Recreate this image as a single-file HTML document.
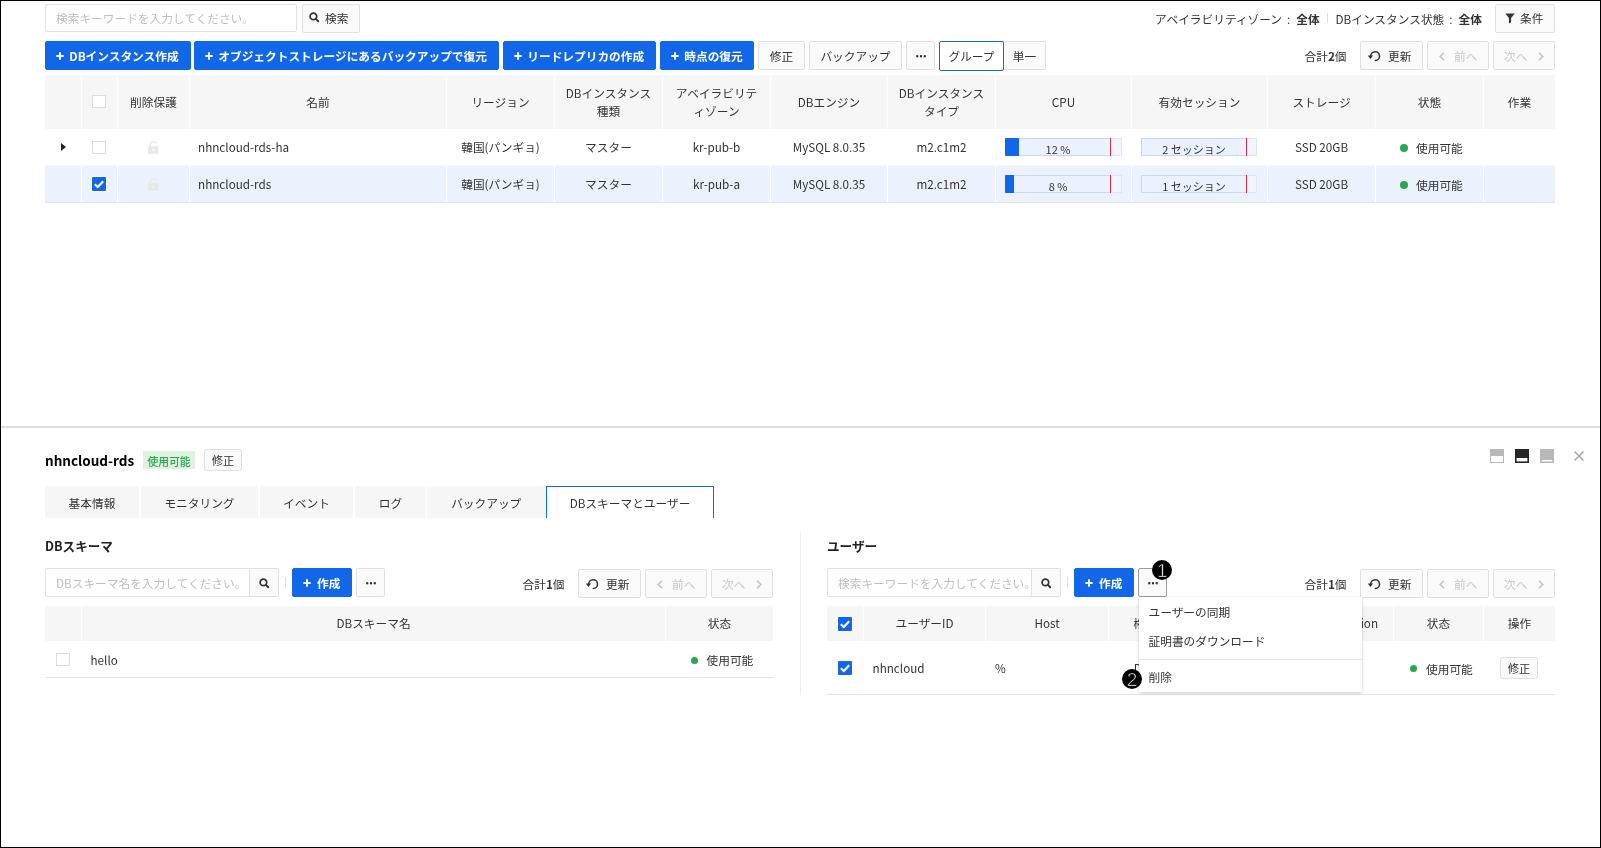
<!DOCTYPE html>
<html lang="ja">
<head>
<meta charset="utf-8">
<title>RDS for MySQL</title>
<style>
*{box-sizing:border-box;margin:0;padding:0}
html,body{width:1601px;height:848px;overflow:hidden;background:#fff}
body{font-family:"Noto Sans CJK JP","Liberation Sans",sans-serif;font-size:11.7px;color:#333;line-height:1}
#root{position:absolute;left:0;top:0;width:1601px;height:848px;will-change:transform;overflow:hidden}
#frame{position:absolute;left:0;top:0;width:1601px;height:848px;border:1px solid #000;z-index:50}
.abs{position:absolute}
.btn{position:absolute;height:29px;border:1px solid #e0e0e0;background:#fafafa;border-radius:2px}
.btn.pri{background:#1167e7;border-color:#1167e7;color:#fff;font-weight:700}
.btn.pri .t{color:#fff}
.btn.dis .t{color:#c6c6c6}
.inp{position:absolute;height:29px;border:1px solid #e0e0e0;background:#fff;border-radius:2px}
.inp .t{color:#bfbfbf}
.t{position:absolute;white-space:nowrap;line-height:17px;height:17px;color:#333}
.c{text-align:center}
.hd{position:absolute;background:#f6f6f6}
.sep{position:absolute;width:1px;background:#fff}
.cb{position:absolute;width:14px;height:13px;border:1px solid #dcdcdc;background:#fff}
.cbon{position:absolute;width:14px;height:14px;background:#1167e7;border-radius:1px;box-shadow:0 0 0 1px #fff}
.dot{position:absolute;width:8px;height:8px;border-radius:50%;background:#26a84c}
.dot.s{width:7px;height:7px}
.tab{position:absolute;top:486px;height:32px;background:#f6f6f6}
.tab.on{background:#fff;border:1px solid #1167e7;border-bottom:0}
.circ{position:absolute;width:20px;height:20px;border-radius:50%;background:#000}
.circ .t{color:#fff;font-family:"Liberation Sans",sans-serif;font-size:19px;line-height:20px;height:20px;left:0;top:1px;width:20px;text-align:center;-webkit-text-stroke:0.7px #000}
.line{position:absolute;height:1px;background:#e4e4e4}
</style>
</head>
<body>
<div id="root">
<div id="frame"></div>
<div class="inp" style="left:45px;top:4px;width:252px;height:28px"><div class="t" style="left:10px;top:4px">検索キーワードを入力してください。</div></div>
<div class="btn " style="left:302px;top:4px;width:58px;height:28.5px;">
<svg class="abs" style="left:6.2px;top:7px" width="11" height="11" viewBox="0 0 11 11"><circle cx="4.4" cy="4.4" r="3.3" fill="none" stroke="#333" stroke-width="1.7"/><path d="M6.9 6.9L9.2 9.2" stroke="#333" stroke-width="2" stroke-linecap="round"/></svg>
<div class="t " style="left:22px;top:4px;">検索</div>
</div>
<div class="t " style="left:1155px;top:9.5px;">アベイラビリティゾーン<span style="margin:0 6px 0 5px">:</span><b>全体</b></div>
<div class="abs" style="left:1327px;top:13px;width:1px;height:10px;background:#ddd"></div>
<div class="t " style="left:1335.5px;top:9.5px;">DBインスタンス状態<span style="margin:0 6px 0 5px">:</span><b>全体</b></div>
<div class="btn " style="left:1495px;top:4px;width:60px;height:28.5px;">
<svg class="abs" style="left:9px;top:8.4px" width="10" height="11" viewBox="0 0 10 11"><path d="M0.3 0.6h9.4L6.1 5v4.2L3.9 10.6V5z" fill="#333"/></svg>
<div class="t " style="left:24px;top:4px;">条件</div>
</div>
<div class="btn pri" style="left:45px;top:41px;width:146px;height:29px;">
<svg class="abs" style="left:10.3px;top:10px" width="8" height="8" viewBox="0 0 8 8"><path d="M4 0.3V7.7M0.3 4H7.7" stroke="#fff" stroke-width="1.9"/></svg>
<div class="t " style="left:23.3px;top:5px;">DBインスタンス作成</div>
</div>
<div class="btn pri" style="left:194px;top:41px;width:305px;height:29px;">
<svg class="abs" style="left:10.3px;top:10px" width="8" height="8" viewBox="0 0 8 8"><path d="M4 0.3V7.7M0.3 4H7.7" stroke="#fff" stroke-width="1.9"/></svg>
<div class="t " style="left:23.3px;top:5px;">オブジェクトストレージにあるバックアップで復元</div>
</div>
<div class="btn pri" style="left:503px;top:41px;width:153px;height:29px;">
<svg class="abs" style="left:10.3px;top:10px" width="8" height="8" viewBox="0 0 8 8"><path d="M4 0.3V7.7M0.3 4H7.7" stroke="#fff" stroke-width="1.9"/></svg>
<div class="t " style="left:23.3px;top:5px;">リードレプリカの作成</div>
</div>
<div class="btn pri" style="left:660px;top:41px;width:94px;height:29px;">
<svg class="abs" style="left:10.3px;top:10px" width="8" height="8" viewBox="0 0 8 8"><path d="M4 0.3V7.7M0.3 4H7.7" stroke="#fff" stroke-width="1.9"/></svg>
<div class="t " style="left:23.3px;top:5px;">時点の復元</div>
</div>
<div class="btn " style="left:758px;top:41px;width:47px;height:29px;">
<div class="t c" style="left:0px;top:5px;width:45px;">修正</div>
</div>
<div class="btn " style="left:809px;top:41px;width:93px;height:29px;">
<div class="t c" style="left:0px;top:5px;width:91px;">バックアップ</div>
</div>
<div class="btn " style="left:906px;top:41px;width:29px;height:29px;">
<svg class="abs" style="left:9px;top:13px" width="10" height="3" viewBox="0 0 10 3"><rect x="0.2" y="0.2" width="2.1" height="2.1" fill="#2a2a2a"/><rect x="3.95" y="0.2" width="2.1" height="2.1" fill="#2a2a2a"/><rect x="7.7" y="0.2" width="2.1" height="2.1" fill="#2a2a2a"/></svg>
</div>
<div class="btn " style="left:1003px;top:41px;width:43px;height:29px;border-left:0;border-radius:0 2px 2px 0">
<div class="t c" style="left:1px;top:5px;width:41px;">単一</div>
</div>
<div class="btn " style="left:939px;top:41px;width:65px;height:30px;background:#fff;border-color:#1167e7">
<div class="t c" style="left:0px;top:5px;width:63px;">グループ</div>
</div>
<div class="t " style="left:1304.5px;top:46.5px;">合計<b>2</b>個</div>
<div class="btn " style="left:1360px;top:41px;width:63px;height:29px;">
<svg class="abs" style="left:6px;top:8px" width="14" height="12" viewBox="0 0 14 12"><path d="M3.7 6.1A4.4 4.4 0 1 1 8.4 10.5" fill="none" stroke="#333" stroke-width="1.5" stroke-linecap="round"/><path d="M0.8 5.4L6.1 5.4L3.4 9z" fill="#333"/></svg>
<div class="t " style="left:27px;top:5px;">更新</div>
</div>
<div class="btn dis" style="left:1427px;top:41px;width:62px;height:29px;">
<svg class="abs" style="left:10.5px;top:9.6px" width="6" height="9" viewBox="0 0 6 9"><path d="M5 0.7L1.2 4.5L5 8.3" fill="none" stroke="#c4c4c4" stroke-width="1.6"/></svg>
<div class="t " style="left:26px;top:5px;">前へ</div>
</div>
<div class="btn dis" style="left:1493px;top:41px;width:62px;height:29px;">
<div class="t " style="left:10px;top:5px;">次へ</div>
<svg class="abs" style="left:44.2px;top:9.6px" width="6" height="9" viewBox="0 0 6 9"><path d="M1 0.7L4.8 4.5L1 8.3" fill="none" stroke="#c4c4c4" stroke-width="1.6"/></svg>
</div>
<div class="hd" style="left:45px;top:75px;width:1510px;height:54px"></div>
<div class="abs" style="left:45px;top:165px;width:1510px;height:1px;background:#f3f7fe"></div>
<div class="abs" style="left:45px;top:166px;width:1510px;height:36px;background:#ebf2fe"></div>
<div class="sep" style="left:81px;top:75px;height:127px"></div>
<div class="sep" style="left:117px;top:75px;height:127px"></div>
<div class="sep" style="left:189px;top:75px;height:127px"></div>
<div class="sep" style="left:446px;top:75px;height:127px"></div>
<div class="sep" style="left:554px;top:75px;height:127px"></div>
<div class="sep" style="left:662px;top:75px;height:127px"></div>
<div class="sep" style="left:770px;top:75px;height:127px"></div>
<div class="sep" style="left:887px;top:75px;height:127px"></div>
<div class="sep" style="left:995px;top:75px;height:127px"></div>
<div class="sep" style="left:1131px;top:75px;height:127px"></div>
<div class="sep" style="left:1267px;top:75px;height:127px"></div>
<div class="sep" style="left:1375px;top:75px;height:127px"></div>
<div class="sep" style="left:1483px;top:75px;height:127px"></div>
<div class="line" style="left:45px;top:202px;width:1510px"></div>
<div class="t c" style="left:118px;top:93px;width:71px;">削除保護</div>
<div class="t c" style="left:190px;top:93px;width:256px;">名前</div>
<div class="t c" style="left:447px;top:93px;width:107px;">リージョン</div>
<div class="t c" style="left:555px;top:84px;width:107px;">DBインスタンス</div>
<div class="t c" style="left:555px;top:102px;width:107px;">種類</div>
<div class="t c" style="left:663px;top:84px;width:107px;">アベイラビリテ</div>
<div class="t c" style="left:663px;top:102px;width:107px;">ィゾーン</div>
<div class="t c" style="left:771px;top:93px;width:116px;">DBエンジン</div>
<div class="t c" style="left:888px;top:84px;width:107px;">DBインスタンス</div>
<div class="t c" style="left:888px;top:102px;width:107px;">タイプ</div>
<div class="t c" style="left:996px;top:93px;width:135px;">CPU</div>
<div class="t c" style="left:1132px;top:93px;width:135px;">有効セッション</div>
<div class="t c" style="left:1268px;top:93px;width:107px;">ストレージ</div>
<div class="t c" style="left:1376px;top:93px;width:107px;">状態</div>
<div class="t c" style="left:1484px;top:93px;width:71px;">作業</div>
<div class="cb" style="left:92px;top:95px"></div>
<div class="t " style="left:198px;top:138px;">nhncloud-rds-ha</div>
<div class="t c" style="left:447px;top:138px;width:107px;">韓国(パンギョ)</div>
<div class="t c" style="left:555px;top:138px;width:107px;">マスター</div>
<div class="t c" style="left:663px;top:138px;width:107px;">kr-pub-b</div>
<div class="t c" style="left:771px;top:138px;width:116px;">MySQL 8.0.35</div>
<div class="t c" style="left:888px;top:138px;width:107px;">m2.c1m2</div>
<div class="t c" style="left:1268px;top:138px;width:107px;">SSD 20GB</div>
<div class="abs" style="left:1005px;top:138px;width:117px;height:18px;border:1px solid #dbe6fc;background:#f1f5fe"></div>
<div class="abs" style="left:1005px;top:138px;width:106px;height:18px;border:1px solid #c3d7fb;background:#ebf1fe"></div>
<div class="abs" style="left:1005px;top:138px;width:14px;height:18px;background:#1167e7;border-radius:1px 0 0 1px"></div>
<div class="abs" style="left:1110px;top:138px;width:1px;height:18px;background:#dc2a3e"></div>
<div class="t c" style="left:1005px;top:141px;width:106px;font-size:11px">12 %</div>
<div class="abs" style="left:1141px;top:138px;width:116px;height:18px;border:1px solid #dbe6fc;background:#f1f5fe"></div>
<div class="abs" style="left:1141px;top:138px;width:106px;height:18px;border:1px solid #c3d7fb;background:#ebf1fe"></div>
<div class="abs" style="left:1246px;top:138px;width:1px;height:18px;background:#dc2a3e"></div>
<div class="t c" style="left:1141px;top:141px;width:106px;font-size:11px">2 セッション</div>
<div class="dot" style="left:1400px;top:144px"></div>
<div class="t " style="left:1416px;top:139px;">使用可能</div>
<svg class="abs" style="left:148px;top:141px" width="11" height="13" viewBox="0 0 11 13"><path d="M2.2 5.5V3.8A3.2 3.2 0 0 1 8.2 2.3" fill="none" stroke="#e8e8e8" stroke-width="1.5"/><path d="M0 5.2h10.4v7.6H0z M4.4 8h1.6v2.2H4.4z" fill="#e8e8e8" fill-rule="evenodd"/></svg>
<div class="t " style="left:198px;top:175px;">nhncloud-rds</div>
<div class="t c" style="left:447px;top:175px;width:107px;">韓国(パンギョ)</div>
<div class="t c" style="left:555px;top:175px;width:107px;">マスター</div>
<div class="t c" style="left:663px;top:175px;width:107px;">kr-pub-a</div>
<div class="t c" style="left:771px;top:175px;width:116px;">MySQL 8.0.35</div>
<div class="t c" style="left:888px;top:175px;width:107px;">m2.c1m2</div>
<div class="t c" style="left:1268px;top:175px;width:107px;">SSD 20GB</div>
<div class="abs" style="left:1005px;top:175px;width:117px;height:18px;border:1px solid #dbe6fc;background:#f1f5fe"></div>
<div class="abs" style="left:1005px;top:175px;width:106px;height:18px;border:1px solid #c3d7fb;background:#ebf1fe"></div>
<div class="abs" style="left:1005px;top:175px;width:9px;height:18px;background:#1167e7;border-radius:1px 0 0 1px"></div>
<div class="abs" style="left:1110px;top:175px;width:1px;height:18px;background:#dc2a3e"></div>
<div class="t c" style="left:1005px;top:178px;width:106px;font-size:11px">8 %</div>
<div class="abs" style="left:1141px;top:175px;width:116px;height:18px;border:1px solid #dbe6fc;background:#f1f5fe"></div>
<div class="abs" style="left:1141px;top:175px;width:106px;height:18px;border:1px solid #c3d7fb;background:#ebf1fe"></div>
<div class="abs" style="left:1246px;top:175px;width:1px;height:18px;background:#dc2a3e"></div>
<div class="t c" style="left:1141px;top:178px;width:106px;font-size:11px">1 セッション</div>
<div class="dot" style="left:1400px;top:181px"></div>
<div class="t " style="left:1416px;top:176px;">使用可能</div>
<svg class="abs" style="left:148px;top:178px" width="11" height="13" viewBox="0 0 11 13"><path d="M2.2 5.5V3.8A3.2 3.2 0 0 1 8.2 2.3" fill="none" stroke="#e8e8e8" stroke-width="1.5"/><path d="M0 5.2h10.4v7.6H0z M4.4 8h1.6v2.2H4.4z" fill="#e8e8e8" fill-rule="evenodd"/></svg>
<svg class="abs" style="left:61px;top:143px" width="5" height="8" viewBox="0 0 5 8"><path d="M0 0L5 4L0 8z" fill="#222"/></svg>
<div class="cb" style="left:92px;top:141px"></div>
<div class="cbon" style="left:92px;top:177px"><svg class="abs" style="left:0;top:0" width="14" height="14" viewBox="0 0 14 14"><path d="M2.8 7.2L5.8 10L11.2 4.2" fill="none" stroke="#fff" stroke-width="2"/></svg></div>
<div class="abs" style="left:1px;top:426px;width:1599px;height:2px;background:#dedede"></div>
<div class="t " style="left:45px;top:450px;font-size:13.5px;font-weight:700;color:#000;line-height:20px;height:20px">nhncloud-rds</div>
<div class="abs" style="left:143px;top:451px;width:52px;height:18px;background:#dff2e2"></div>
<div class="t c" style="left:143px;top:453px;width:52px;font-size:10.8px;font-weight:500;color:#25a74b;line-height:16px;height:16px">使用可能</div>
<div class="btn " style="left:204px;top:449px;width:38px;height:22px;">
<div class="t c" style="left:0px;top:2px;width:36px;font-size:11.3px;line-height:16px;height:16px">修正</div>
</div>
<svg class="abs" style="left:1490px;top:449px" width="14" height="14"><rect x="0.5" y="0.5" width="13" height="13" fill="#fff" stroke="#b8b8b8"/><rect x="0" y="0" width="14" height="7" fill="#b8b8b8"/></svg>
<svg class="abs" style="left:1515px;top:449px" width="14" height="14"><rect x="0" y="0" width="14" height="14" fill="#262626"/><rect x="1.6" y="9" width="10.8" height="3.4" fill="#fff"/></svg>
<svg class="abs" style="left:1540px;top:449px" width="14" height="14"><rect x="0" y="0" width="14" height="14" fill="#b8b8b8"/><rect x="1.6" y="11" width="10.8" height="1.4" fill="#fff"/></svg>
<svg class="abs" style="left:1574px;top:451px" width="10" height="10"><path d="M0.5 0.5L9.5 9.5M9.5 0.5L0.5 9.5" stroke="#a8a8a8" stroke-width="1.5"/></svg>
<div class="tab" style="left:45px;width:94px"><div class="t c" style="left:0;top:8px;width:94px">基本情報</div></div>
<div class="tab" style="left:141px;width:117px"><div class="t c" style="left:0;top:8px;width:117px">モニタリング</div></div>
<div class="tab" style="left:260px;width:93px"><div class="t c" style="left:0;top:8px;width:93px">イベント</div></div>
<div class="tab" style="left:355px;width:71px"><div class="t c" style="left:0;top:8px;width:71px">ログ</div></div>
<div class="tab" style="left:427px;width:118.5px"><div class="t c" style="left:0;top:8px;width:118.5px">バックアップ</div></div>
<div class="tab on" style="left:546px;width:168px"><div class="t c" style="left:0;top:7px;width:166px">DBスキーマとユーザー</div></div>
<div class="t " style="left:45px;top:537px;font-size:12.6px;font-weight:700;color:#222;line-height:18px;height:18px">DBスキーマ</div>
<div class="inp" style="left:45px;top:568px;width:205px;border-radius:2px 0 0 2px"><div class="t" style="left:10px;top:5px">DBスキーマ名を入力してください。</div></div>
<div class="btn " style="left:249px;top:568px;width:30px;height:29px;border-radius:0 2px 2px 0">
<svg class="abs" style="left:9px;top:8.5px" width="11" height="11" viewBox="0 0 11 11"><circle cx="4.4" cy="4.4" r="3.3" fill="none" stroke="#333" stroke-width="1.7"/><path d="M6.9 6.9L9.2 9.2" stroke="#333" stroke-width="2" stroke-linecap="round"/></svg>
</div>
<div class="abs" style="left:285px;top:577px;width:1px;height:11px;background:#ddd"></div>
<div class="btn pri" style="left:292px;top:568px;width:60px;height:29px;">
<svg class="abs" style="left:10px;top:10px" width="8" height="8" viewBox="0 0 8 8"><path d="M4 0.3V7.7M0.3 4H7.7" stroke="#fff" stroke-width="1.9"/></svg>
<div class="t " style="left:24px;top:5px;">作成</div>
</div>
<div class="btn " style="left:356px;top:568px;width:29px;height:29px;">
<svg class="abs" style="left:9px;top:13px" width="10" height="3" viewBox="0 0 10 3"><rect x="0.2" y="0.2" width="2.1" height="2.1" fill="#2a2a2a"/><rect x="3.95" y="0.2" width="2.1" height="2.1" fill="#2a2a2a"/><rect x="7.7" y="0.2" width="2.1" height="2.1" fill="#2a2a2a"/></svg>
</div>
<div class="t " style="left:522.5px;top:574.5px;">合計<b>1</b>個</div>
<div class="btn " style="left:578px;top:569px;width:63px;height:29px;">
<svg class="abs" style="left:6px;top:8px" width="14" height="12" viewBox="0 0 14 12"><path d="M3.7 6.1A4.4 4.4 0 1 1 8.4 10.5" fill="none" stroke="#333" stroke-width="1.5" stroke-linecap="round"/><path d="M0.8 5.4L6.1 5.4L3.4 9z" fill="#333"/></svg>
<div class="t " style="left:27px;top:5px;">更新</div>
</div>
<div class="btn dis" style="left:645px;top:569px;width:62px;height:29px;">
<svg class="abs" style="left:10.5px;top:9.6px" width="6" height="9" viewBox="0 0 6 9"><path d="M5 0.7L1.2 4.5L5 8.3" fill="none" stroke="#c4c4c4" stroke-width="1.6"/></svg>
<div class="t " style="left:26px;top:5px;">前へ</div>
</div>
<div class="btn dis" style="left:711px;top:569px;width:62px;height:29px;">
<div class="t " style="left:10px;top:5px;">次へ</div>
<svg class="abs" style="left:44.2px;top:9.6px" width="6" height="9" viewBox="0 0 6 9"><path d="M1 0.7L4.8 4.5L1 8.3" fill="none" stroke="#c4c4c4" stroke-width="1.6"/></svg>
</div>
<div class="hd" style="left:45px;top:606px;width:728px;height:35px"></div>
<div class="sep" style="left:81px;top:606px;height:35px"></div>
<div class="sep" style="left:665px;top:606px;height:35px"></div>
<div class="t c" style="left:82px;top:614px;width:583px;">DBスキーマ名</div>
<div class="t c" style="left:666px;top:614px;width:107px;">状态</div>
<div class="cb" style="left:56px;top:653px"></div>
<div class="t " style="left:90.5px;top:651px;">hello</div>
<div class="dot s" style="left:691px;top:657px"></div>
<div class="t " style="left:706.5px;top:651px;">使用可能</div>
<div class="line" style="left:45px;top:677px;width:728px"></div>
<div class="abs" style="left:800px;top:532px;width:1px;height:163px;background:#eee"></div>
<div class="t " style="left:827px;top:537px;font-size:12.6px;font-weight:700;color:#222;line-height:18px;height:18px">ユーザー</div>
<div class="inp" style="left:827px;top:568px;width:205px;border-radius:2px 0 0 2px"><div class="t" style="left:10px;top:5px">検索キーワードを入力してください。</div></div>
<div class="btn " style="left:1031px;top:568px;width:30px;height:29px;border-radius:0 2px 2px 0">
<svg class="abs" style="left:9px;top:8.5px" width="11" height="11" viewBox="0 0 11 11"><circle cx="4.4" cy="4.4" r="3.3" fill="none" stroke="#333" stroke-width="1.7"/><path d="M6.9 6.9L9.2 9.2" stroke="#333" stroke-width="2" stroke-linecap="round"/></svg>
</div>
<div class="abs" style="left:1067px;top:577px;width:1px;height:11px;background:#ddd"></div>
<div class="btn pri" style="left:1074px;top:568px;width:60px;height:29px;">
<svg class="abs" style="left:10px;top:10px" width="8" height="8" viewBox="0 0 8 8"><path d="M4 0.3V7.7M0.3 4H7.7" stroke="#fff" stroke-width="1.9"/></svg>
<div class="t " style="left:24px;top:5px;">作成</div>
</div>
<div class="btn " style="left:1138px;top:568px;width:29px;height:29px;border-color:#9a9a9a">
<svg class="abs" style="left:9px;top:13px" width="10" height="3" viewBox="0 0 10 3"><rect x="0.2" y="0.2" width="2.1" height="2.1" fill="#2a2a2a"/><rect x="3.95" y="0.2" width="2.1" height="2.1" fill="#2a2a2a"/><rect x="7.7" y="0.2" width="2.1" height="2.1" fill="#2a2a2a"/></svg>
</div>
<div class="t " style="left:1304.5px;top:574.5px;">合計<b>1</b>個</div>
<div class="btn " style="left:1360px;top:569px;width:63px;height:29px;">
<svg class="abs" style="left:6px;top:8px" width="14" height="12" viewBox="0 0 14 12"><path d="M3.7 6.1A4.4 4.4 0 1 1 8.4 10.5" fill="none" stroke="#333" stroke-width="1.5" stroke-linecap="round"/><path d="M0.8 5.4L6.1 5.4L3.4 9z" fill="#333"/></svg>
<div class="t " style="left:27px;top:5px;">更新</div>
</div>
<div class="btn dis" style="left:1427px;top:569px;width:62px;height:29px;">
<svg class="abs" style="left:10.5px;top:9.6px" width="6" height="9" viewBox="0 0 6 9"><path d="M5 0.7L1.2 4.5L5 8.3" fill="none" stroke="#c4c4c4" stroke-width="1.6"/></svg>
<div class="t " style="left:26px;top:5px;">前へ</div>
</div>
<div class="btn dis" style="left:1493px;top:569px;width:62px;height:29px;">
<div class="t " style="left:10px;top:5px;">次へ</div>
<svg class="abs" style="left:44.2px;top:9.6px" width="6" height="9" viewBox="0 0 6 9"><path d="M1 0.7L4.8 4.5L1 8.3" fill="none" stroke="#c4c4c4" stroke-width="1.6"/></svg>
</div>
<div class="hd" style="left:827px;top:606px;width:728px;height:35px"></div>
<div class="sep" style="left:863px;top:606px;height:35px"></div>
<div class="sep" style="left:985px;top:606px;height:35px"></div>
<div class="sep" style="left:1108px;top:606px;height:35px"></div>
<div class="sep" style="left:1181px;top:606px;height:35px"></div>
<div class="sep" style="left:1302px;top:606px;height:35px"></div>
<div class="sep" style="left:1393px;top:606px;height:35px"></div>
<div class="sep" style="left:1483px;top:606px;height:35px"></div>
<div class="t c" style="left:864px;top:614px;width:121px;">ユーザーID</div>
<div class="t c" style="left:986px;top:614px;width:122px;">Host</div>
<div class="t c" style="left:1109px;top:614px;width:72px;">権限</div>
<div class="t c" style="left:1182px;top:614px;width:120px;">認証プラグイン</div>
<div class="t c" style="left:1303px;top:614px;width:90px;">TLS Option</div>
<div class="t c" style="left:1394px;top:614px;width:89px;">状态</div>
<div class="t c" style="left:1484px;top:614px;width:71px;">操作</div>
<div class="cbon" style="left:838px;top:616.5px"><svg class="abs" style="left:0;top:0" width="14" height="14" viewBox="0 0 14 14"><path d="M2.8 7.2L5.8 10L11.2 4.2" fill="none" stroke="#fff" stroke-width="2"/></svg></div>
<div class="cbon" style="left:838px;top:661px"><svg class="abs" style="left:0;top:0" width="14" height="14" viewBox="0 0 14 14"><path d="M2.8 7.2L5.8 10L11.2 4.2" fill="none" stroke="#fff" stroke-width="2"/></svg></div>
<div class="t " style="left:872.5px;top:659px;">nhncloud</div>
<div class="t " style="left:995px;top:659px;">%</div>
<div class="t c" style="left:1109px;top:659px;width:72px;">DDL</div>
<div class="dot s" style="left:1410px;top:665px"></div>
<div class="t " style="left:1426px;top:660px;">使用可能</div>
<div class="btn " style="left:1500px;top:657px;width:38px;height:22px;">
<div class="t c" style="left:0px;top:2px;width:36px;font-size:11.3px;line-height:16px;height:16px">修正</div>
</div>
<div class="line" style="left:827px;top:694px;width:728px"></div>
<div class="abs" style="left:1139px;top:597px;width:223px;height:95px;background:#fff;box-shadow:0 1px 3px rgba(0,0,0,.22)">
<div class="t " style="left:9.5px;top:6px;">ユーザーの同期</div>
<div class="t " style="left:9.5px;top:35px;">証明書のダウンロード</div>
<div class="abs" style="left:0;top:62px;width:223px;height:1px;background:#e6e6e6"></div>
<div class="t " style="left:9.5px;top:71px;">削除</div>
</div>
<div class="circ" style="left:1152px;top:559.5px"><div class="t">1</div></div>
<div class="circ" style="left:1122px;top:669px"><div class="t">2</div></div>
</div>
</body>
</html>
